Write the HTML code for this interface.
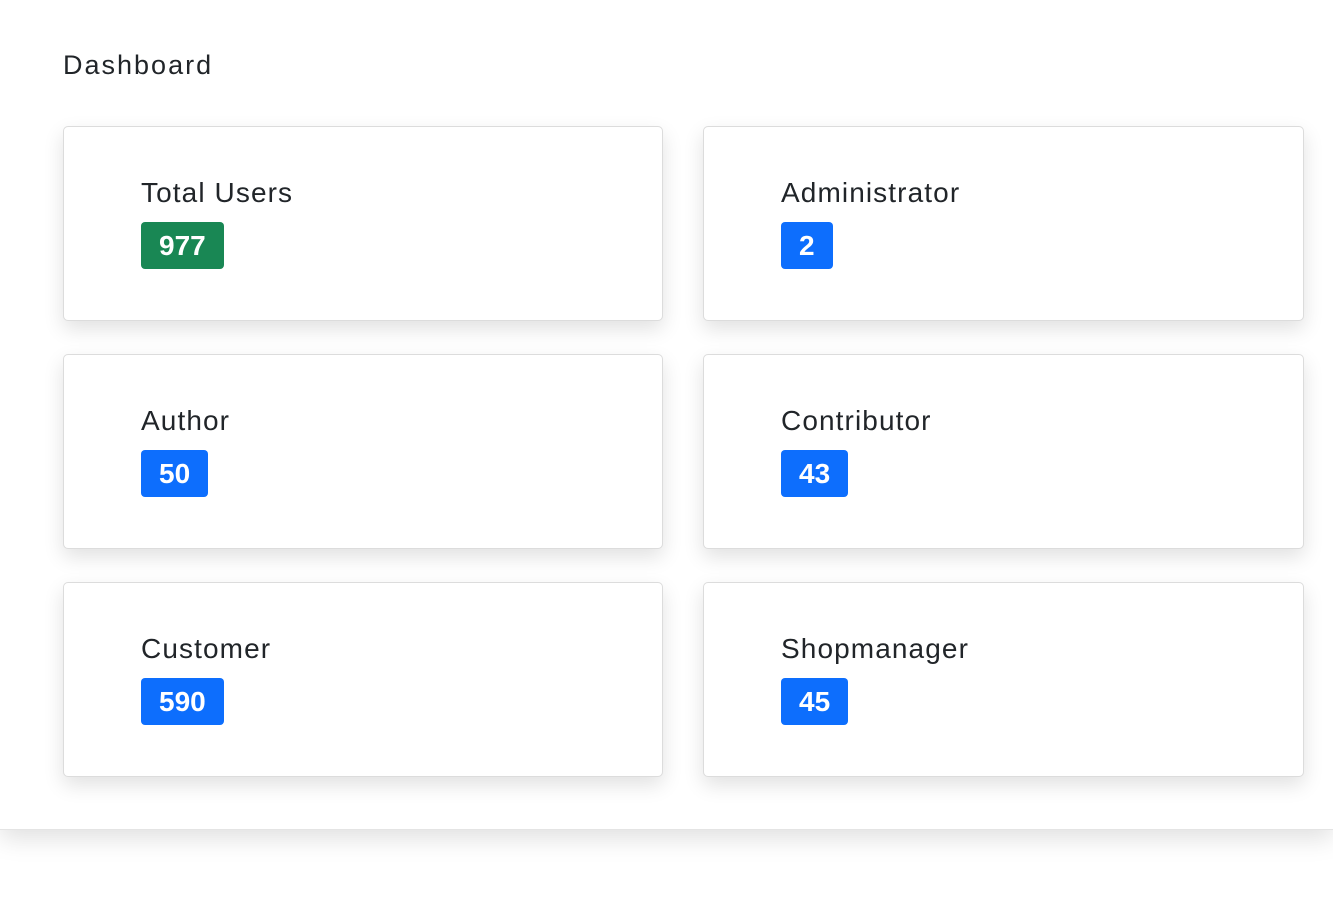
<!DOCTYPE html>
<html><head><style>
body{margin:0;width:1333px;height:907px;background:#fff;font-family:"Liberation Sans",sans-serif;overflow:hidden;position:relative}
.panel{position:absolute;left:0;top:0;width:1333px;height:829px;background:#fff;box-shadow:0 8px 24px rgba(0,0,0,0.13);border-bottom:1px solid #e4e4e4}
h1{position:absolute;left:63px;top:50px;margin:0;font-weight:normal;font-size:27px;letter-spacing:2px;color:#212529}
.card{position:absolute;width:598px;height:193px;border:1px solid #dcdcdc;border-radius:5px;background:#fff;box-shadow:0 8px 20px rgba(0,0,0,0.12)}
.r{width:599px}
.lbl{position:absolute;left:77px;top:50px;font-size:28px;letter-spacing:1.1px;color:#212529}
.b{position:absolute;left:77px;top:95px;height:47px;line-height:47px;padding:0 18px;border-radius:4px;color:#fff;font-weight:bold;font-size:28px;background:#0d6efd}
.g{background:#198754}
</style></head><body>
<div class="panel">
<h1>Dashboard</h1>
<div class="card" style="left:63px;top:126px"><div class="lbl">Total Users</div><div class="b g">977</div></div>
<div class="card r" style="left:703px;top:126px"><div class="lbl">Administrator</div><div class="b">2</div></div>
<div class="card" style="left:63px;top:354px"><div class="lbl">Author</div><div class="b">50</div></div>
<div class="card r" style="left:703px;top:354px"><div class="lbl">Contributor</div><div class="b">43</div></div>
<div class="card" style="left:63px;top:582px"><div class="lbl">Customer</div><div class="b">590</div></div>
<div class="card r" style="left:703px;top:582px"><div class="lbl">Shopmanager</div><div class="b">45</div></div>
</div>
</body></html>
